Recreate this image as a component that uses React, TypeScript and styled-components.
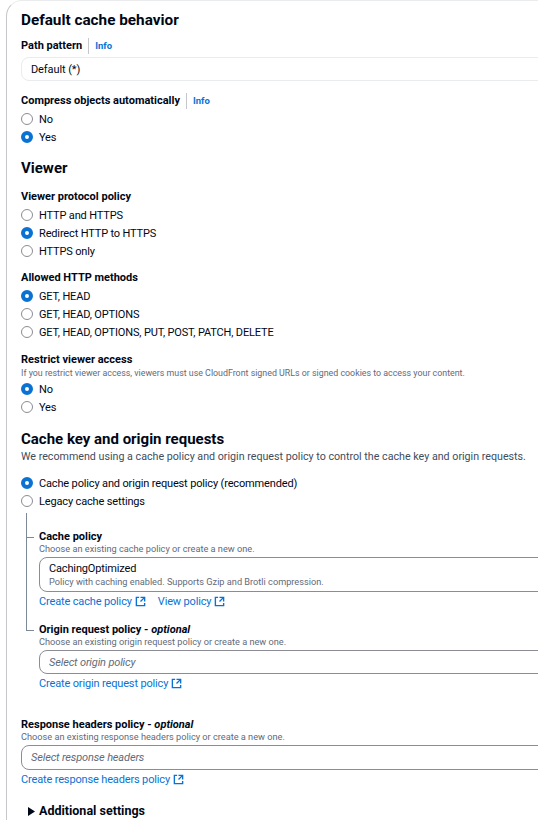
import { FC, ReactNode } from "react";
import styled, { createGlobalStyle } from "styled-components";

const GlobalStyle = createGlobalStyle`
  html, body {
    margin: 0;
    padding: 0;
    overflow: hidden;
    background: #ffffff;
  }
  body {
    font-family: Roboto, "Open Sans", sans-serif;
    color: #000716;
    font-size: 11px;
  }
`;

const ExternalIcon: FC = () => (
  <StIcon viewBox="0 0 16 16" aria-hidden="true">
    <path d="M14 8.01v-6H8" />
    <path d="M14.02 2 8 8" />
    <path d="M6 2H2v12h12v-4" />
  </StIcon>
);

type RadioItem = { label: string; checked?: boolean };

const RadioGroup: FC<{ items: RadioItem[] }> = ({ items }) => (
  <StRadioList>
    {items.map((item) => (
      <StRadioRow key={item.label}>
        <StRadioDot $checked={!!item.checked} />
        <span>{item.label}</span>
      </StRadioRow>
    ))}
  </StRadioList>
);

const ExtLink: FC<{ children: ReactNode }> = ({ children }) => (
  <StLink>
    {children}
    <ExternalIcon />
  </StLink>
);

export default function App() {
  return (
    <>
      <GlobalStyle />
      <StPage>
        <StCard>
          <StTitle>Default cache behavior</StTitle>

          <StField $top={7}>
            <StLabel>
              Path pattern
              <StInfoSep />
              <StInfo>Info</StInfo>
            </StLabel>
            <StInput>Default (*)</StInput>
          </StField>

          <StField $top={12}>
            <StLabel>
              Compress objects automatically
              <StInfoSep />
              <StInfo>Info</StInfo>
            </StLabel>
            <RadioGroup items={[{ label: "No" }, { label: "Yes", checked: true }]} />
          </StField>

          <StSection $top={11}>Viewer</StSection>

          <StField $top={10}>
            <StLabel>Viewer protocol policy</StLabel>
            <RadioGroup
              items={[
                { label: "HTTP and HTTPS" },
                { label: "Redirect HTTP to HTTPS", checked: true },
                { label: "HTTPS only" },
              ]}
            />
          </StField>

          <StField $top={10}>
            <StLabel>Allowed HTTP methods</StLabel>
            <RadioGroup
              items={[
                { label: "GET, HEAD", checked: true },
                { label: "GET, HEAD, OPTIONS" },
                { label: "GET, HEAD, OPTIONS, PUT, POST, PATCH, DELETE" },
              ]}
            />
          </StField>

          <StField $top={11}>
            <StLabel>Restrict viewer access</StLabel>
            <StDesc>
              If you restrict viewer access, viewers must use CloudFront signed URLs or signed
              cookies to access your content.
            </StDesc>
            <RadioGroup items={[{ label: "No", checked: true }, { label: "Yes" }]} />
          </StField>

          <StSection $top={12}>Cache key and origin requests</StSection>
          <StSectionDesc>
            We recommend using a cache policy and origin request policy to control the cache key
            and origin requests.
          </StSectionDesc>

          <StField $top={10}>
            <RadioGroup
              items={[
                { label: "Cache policy and origin request policy (recommended)", checked: true },
                { label: "Legacy cache settings" },
              ]}
            />
          </StField>

          <StTree>
            <StTreeItem $gap={16}>
              <StLabel>Cache policy</StLabel>
              <StHint>Choose an existing cache policy or create a new one.</StHint>
              <StSelect $height={35}>
                <StSelectValue>CachingOptimized</StSelectValue>
                <StSelectSub>
                  Policy with caching enabled. Supports Gzip and Brotli compression.
                </StSelectSub>
              </StSelect>
              <StLinks>
                <ExtLink>Create cache policy</ExtLink>
                <ExtLink>View policy</ExtLink>
              </StLinks>
            </StTreeItem>
            <StTreeItem $gap={12} $last>
              <StLabel>
                Origin request policy - <em>optional</em>
              </StLabel>
              <StHint>Choose an existing origin request policy or create a new one.</StHint>
              <StSelect $height={24}>
                <StPlaceholder>Select origin policy</StPlaceholder>
              </StSelect>
              <StLinks>
                <ExtLink>Create origin request policy</ExtLink>
              </StLinks>
            </StTreeItem>
          </StTree>

          <StField $top={25}>
            <StLabel>
              Response headers policy - <em>optional</em>
            </StLabel>
            <StHint>Choose an existing response headers policy or create a new one.</StHint>
            <StSelect $height={25}>
              <StPlaceholder>Select response headers</StPlaceholder>
            </StSelect>
            <StLinks>
              <ExtLink>Create response headers policy</ExtLink>
            </StLinks>
          </StField>

          <StExpander>
            <StCaret viewBox="0 0 7 9" aria-hidden="true">
              <path d="M0 0 L7 4.5 L0 9 Z" />
            </StCaret>
            Additional settings
          </StExpander>
        </StCard>
      </StPage>
    </>
  );
}

const StPage = styled.div`
  padding-left: 6px;
  width: 580px;
`;

const StCard = styled.div`
  border-top: 1px solid #e9ebed;
  border-left: 1px solid #c6c6cd;
  border-top-left-radius: 16px;
  padding: 8px 0 20px 14px;
`;

const StTitle = styled.h2`
  margin: 0;
  font-size: 15.3px;
  line-height: 22px;
  font-weight: 700;
`;

const StSection = styled.h3<{ $top: number }>`
  margin: ${(p) => p.$top}px 0 0;
  font-size: 15px;
  line-height: 22px;
  font-weight: 700;
`;

const StSectionDesc = styled.div`
  font-size: 10.7px;
  line-height: 14px;
  color: #414d5c;
`;

const StField = styled.div<{ $top: number }>`
  margin-top: ${(p) => p.$top}px;
`;

const StLabel = styled.div`
  display: flex;
  align-items: center;
  font-size: 11px;
  line-height: 16px;
  font-weight: 700;
  white-space: pre;

  em {
    font-style: italic;
  }
`;

const StInfoSep = styled.span`
  width: 1px;
  height: 16px;
  background: #c6c6cd;
  margin: 0 6px;
`;

const StInfo = styled.span`
  font-size: 9.5px;
  font-weight: 700;
  color: #0972d3;
`;

const StDesc = styled.div`
  margin-top: -1px;
  font-size: 8.85px;
  line-height: 12px;
  color: #5f6b7a;
`;

const StHint = styled.div`
  margin-top: -2px;
  font-size: 9.2px;
  line-height: 12px;
  color: #5f6b7a;
`;

const StInput = styled.div`
  margin-top: 3px;
  height: 22px;
  border: 1px solid #e9ebed;
  border-radius: 8px;
  padding: 0 9px;
  display: flex;
  align-items: center;
  font-size: 11px;
  letter-spacing: -0.1px;
`;

const StRadioList = styled.div`
  margin-top: 1px;
  display: flex;
  flex-direction: column;
`;

const StRadioRow = styled.div`
  display: flex;
  align-items: center;
  gap: 6px;
  height: 18px;
  font-size: 11px;
  letter-spacing: -0.15px;
`;

const StRadioDot = styled.span<{ $checked: boolean }>`
  box-sizing: border-box;
  flex: none;
  width: 12px;
  height: 12px;
  border-radius: 50%;
  background: #ffffff;
  border: ${(p) => (p.$checked ? "4px solid #0972d3" : "1.5px solid #8c8c94")};
`;

const StTree = styled.div`
  margin-left: 5px;
  padding-top: 3px;
  padding-left: 13px;
`;

const StTreeItem = styled.div<{ $gap: number; $last?: boolean }>`
  position: relative;
  margin-top: ${(p) => p.$gap}px;

  &::before {
    content: "";
    position: absolute;
    left: -13px;
    top: -${(p) => p.$gap}px;
    width: 7px;
    height: ${(p) => p.$gap + 8}px;
    border-left: 1px solid #7d8998;
    border-bottom: 1px solid #7d8998;
  }

  &::after {
    content: "";
    display: ${(p) => (p.$last ? "none" : "block")};
    position: absolute;
    left: -13px;
    top: 8px;
    bottom: -${(p) => p.$gap}px;
    border-left: 1px solid #7d8998;
  }
`;

const StSelect = styled.div<{ $height: number }>`
  margin-top: 2px;
  min-height: ${(p) => p.$height}px;
  border: 1px solid #8c8c94;
  border-radius: 8px;
  padding: 3px 9px 2px;
  box-sizing: border-box;
  display: flex;
  flex-direction: column;
  justify-content: center;
`;

const StSelectValue = styled.div`
  font-size: 11px;
  line-height: 14px;
  letter-spacing: -0.15px;
`;

const StSelectSub = styled.div`
  font-size: 9.2px;
  line-height: 12px;
  color: #5f6b7a;
`;

const StPlaceholder = styled.div`
  font-size: 11px;
  line-height: 14px;
  letter-spacing: -0.15px;
  font-style: italic;
  color: #5f6b7a;
`;

const StLinks = styled.div`
  display: flex;
  gap: 12px;
  height: 18px;
  align-items: center;
`;

const StLink = styled.span`
  display: inline-flex;
  align-items: center;
  gap: 3px;
  font-size: 11px;
  letter-spacing: -0.15px;
  color: #0972d3;
`;

const StIcon = styled.svg`
  width: 11px;
  height: 11px;
  fill: none;
  stroke: currentColor;
  stroke-width: 2;
`;

const StExpander = styled.div`
  margin-top: 14px;
  display: flex;
  align-items: center;
  gap: 4px;
  padding-left: 7px;
  font-size: 12.5px;
  line-height: 18px;
  font-weight: 700;
`;

const StCaret = styled.svg`
  width: 7px;
  height: 9px;
  fill: #000716;
`;
